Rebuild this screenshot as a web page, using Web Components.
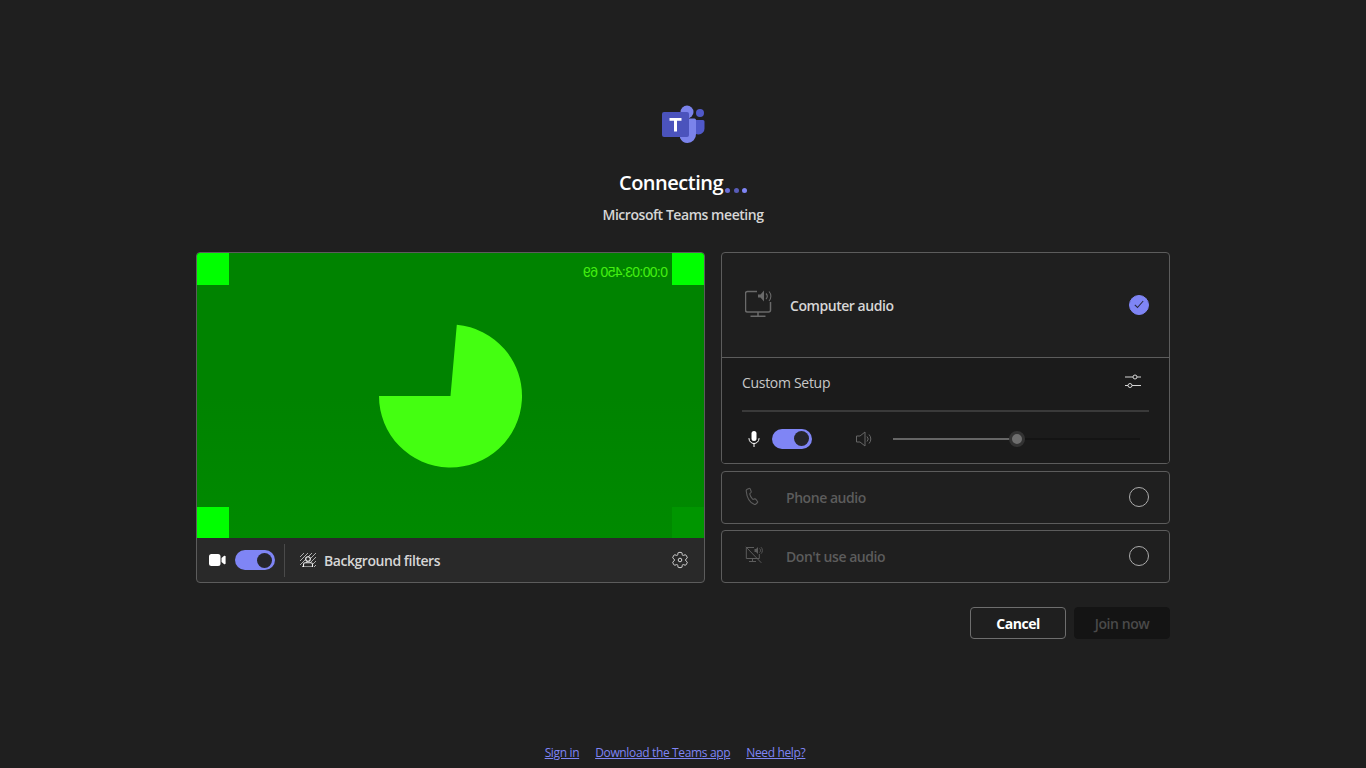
<!DOCTYPE html>
<html lang="en">
<head>
<meta charset="utf-8">
<title>Microsoft Teams meeting</title>
<style>
  html, body { margin: 0; background: #1f1f1f; }
  body { font-family: "Open Sans", "Liberation Sans", sans-serif; color: #fff; }
</style>
</head>
<body>
<prejoin-screen></prejoin-screen>

<script>
const icons = {
  computer: `<svg width="28" height="28" viewBox="0 0 28 28" fill="none" stroke="#6a6a6a"><path d="M12 1.500H2.500a2 2 0 0 0-2 2V20a2 2 0 0 0 2 2h21a2 2 0 0 0 2-2v-8" stroke-width="1.500"/><path d="M13 22v4M5.500 26.200h15" stroke-width="1.500"/><path d="M13 4.500h2.500l3.500-4v11l-3.500-4H13z" fill="#6a6a6a" stroke="none"/><path d="M21 3.500a4 4 0 0 1 0 5.500M24 1.500a7 7 0 0 1 0 9.500" stroke-width="1.100"/></svg>`,
  phone: `<svg width="16" height="18" viewBox="0 0 16 18" fill="none" stroke="#5c5c5c" stroke-width="1.100"><path d="M2.200 2.200 4 1.400c.5-.2 1 0 1.200.5l1 2.500c.2.4 0 .9-.3 1.200L5 6.400c-.2.2-.3.5-.2.8.3 1.600 1.500 3.700 2.800 4.900.2.2.5.3.8.2l1.300-.4c.4-.1.9 0 1.200.4l1.600 2.200c.3.4.2 1-.2 1.300l-1.400 1.200c-.5.4-1.200.6-1.800.3C4.800 15.500 1.800 10 1.200 4c-.1-.8.3-1.500 1-1.800Z"/></svg>`,
  noAudio: `<svg width="18" height="18" viewBox="0 0 18 18" fill="none" stroke="#5c5c5c"><path d="M9 1.500H1.300v11h13V8M7.500 12.500v2.500M4 15.500h7M.8 .8l15.500 16" stroke-width="1"/><path d="M9.500 3h1.500l2-2v7l-2-2H9.500z" fill="#5c5c5c" stroke="none"/><path d="M14.500 2.500a2.500 2.500 0 0 1 0 4M16 1.200a4.500 4.500 0 0 1 0 6.500" stroke-width=".9"/></svg>`
};

class TeamsLogo extends HTMLElement {
  constructor() {
    super();
    this.attachShadow({ mode: 'open' });
    this.shadowRoot.innerHTML = `
      <style>:host { display: block; width: 44px; height: 40px; } svg { display: block; }</style>
      <svg width="44" height="40" viewBox="-1 0 44 40">
        <circle cx="38" cy="9" r="4" fill="#5059c9"/>
        <path d="M31 16h10a1.500 1.500 0 0 1 1.500 1.500v6.500a6 6 0 0 1-6 6.500 6.500 6.500 0 0 1-5.500-3z" fill="#5059c9"/>
        <path d="M18 14.500h14.500a1.500 1.500 0 0 1 1.500 1.500v14a8.500 8.500 0 0 1-8.500 9 8.500 8.500 0 0 1-7.500-5z" fill="#7b83eb"/>
        <circle cx="25" cy="8" r="6.500" fill="#7b83eb"/>
        <rect x="0" y="8" width="27" height="25" rx="2" fill="#4b53bc"/>
        <path d="M7.500 14h12v2.800h-4.500V27.500h-3V16.800h-4.500z" fill="#fff"/>
      </svg>`;
  }
}

class LoadingDots extends HTMLElement {
  constructor() {
    super();
    this.attachShadow({ mode: 'open' });
    this.shadowRoot.innerHTML = `
      <style>
        :host { display: inline-flex; gap: 3.500px; align-items: center; }
        i { width: 5px; height: 5px; border-radius: 50%; background: #7f85f5; }
        i:nth-child(2) { background: #6b70d8; }
        i:nth-child(3) { background: #585cb8; }
      </style>
      <i></i><i></i><i></i>`;
  }
}

class ToggleSwitch extends HTMLElement {
  constructor() {
    super();
    this.attachShadow({ mode: 'open' });
    this.shadowRoot.innerHTML = `
      <style>
        :host { display: flex; justify-content: flex-end; align-items: center; box-sizing: border-box;
                width: 40px; height: 20px; padding-right: 3px; border-radius: 10px; background: #7f85f5; }
        i { width: 15px; height: 15px; border-radius: 50%; background: #26262c; }
      </style>
      <i></i>`;
  }
}

class VideoPreview extends HTMLElement {
  constructor() {
    super();
    this.attachShadow({ mode: 'open' });
    this.shadowRoot.innerHTML = `
      <style>
        :host { display: flex; flex-direction: column; box-sizing: border-box; height: 331px;
                border: 1px solid #5c5c5c; border-radius: 4px; overflow: hidden; background: #292929; }
        .feed { display: block; flex: none; }
        .feed text { font-family: "Liberation Sans", sans-serif; font-size: 14px; letter-spacing: -.65px; fill: #44f010; }
        .bar { flex: 1; display: flex; align-items: center; padding: 0 15px 0 12px; }
        toggle-switch { margin-left: 9px; }
        .sep { width: 1px; height: 33px; background: #4a4a4a; margin: 0 15px 0 9px; }
        .label { margin-left: 8px; flex: 1; font-size: 14px; font-weight: 600; color: #d6d6d6; letter-spacing: -.45px; }
        svg { display: block; flex: none; }
      </style>
      <svg class="feed" width="507" height="285" viewBox="0 0 507 285">
        <defs>
          <linearGradient id="bg" x1="0" y1="0" x2="0" y2="1">
            <stop offset=".5" stop-color="#008300"/>
            <stop offset="1" stop-color="#008a00"/>
          </linearGradient>
        </defs>
        <rect width="507" height="285" fill="url(#bg)"/>
        <rect width="32" height="32" fill="#00ff00"/>
        <rect x="475" width="32" height="32" fill="#00ff00"/>
        <rect y="254" width="32" height="31" fill="#00ff00"/>
        <rect x="475" y="254" width="32" height="31" fill="#009600"/>
        <path d="M253.500 143H182A71.500 71.500 0 1 0 259.800 71.800Z" fill="#44ff11"/>
        <text transform="translate(471 24) scale(-1 1)" xml:space="preserve">0:00:03:450 69</text>
      </svg>
      <div class="bar">
        <svg width="17" height="12" viewBox="0 0 17 12" fill="#fff"><rect width="11.500" height="12" rx="2.500"/><path d="M12.500 4 15.200 1.800c.6-.4 1.400 0 1.400.7v7c0 .7-.8 1.100-1.400.7L12.500 8z"/></svg>
        <toggle-switch></toggle-switch>
        <span class="sep"></span>
        <svg width="16" height="14" viewBox="0 0 16 14" fill="none" stroke="#bdbdbd" stroke-width=".9">
          <path d="M0 4 4 0M0 8 8 0M0 12 12 0M2 14 16 0M6 14 16 4M10 14 16 8M14 14 16 12"/>
          <path d="M3.500 14v-2.500c0-1 .8-1.800 1.800-1.800h5.400c1 0 1.800.8 1.800 1.800V14z" fill="#292929" stroke="#f0f0f0" stroke-width="1.100"/>
          <circle cx="8" cy="6" r="2.300" fill="#292929" stroke="#f0f0f0" stroke-width="1.100"/>
        </svg>
        <span class="label">Background filters</span>
        <svg width="18" height="18" viewBox="0 0 20 20" fill="none" stroke="#d6d6d6" stroke-width="1.100"><path d="M1.910 7.380A8.500 8.500 0 0 1 3.700 4.300a.5.5 0 0 1 .54-.13l1.920.68a1 1 0 0 0 1.320-.76l.36-2a.5.5 0 0 1 .4-.4 8.530 8.530 0 0 1 3.550 0c.2.04.35.2.38.4l.37 2a1 1 0 0 0 1.320.76l1.920-.68a.5.5 0 0 1 .54.13 8.500 8.500 0 0 1 1.780 3.080c.06.2 0 .4-.15.54l-1.560 1.320a1 1 0 0 0 0 1.520l1.560 1.320a.5.5 0 0 1 .15.54 8.500 8.500 0 0 1-1.780 3.080.5.5 0 0 1-.54.13l-1.920-.68a1 1 0 0 0-1.320.76l-.37 2a.5.5 0 0 1-.38.4 8.530 8.530 0 0 1-3.560 0 .5.5 0 0 1-.38-.4l-.36-2a1 1 0 0 0-1.320-.76l-1.920.68a.5.5 0 0 1-.54-.13 8.500 8.500 0 0 1-1.780-3.080.5.5 0 0 1 .15-.54l1.560-1.320a1 1 0 0 0 0-1.520L2.060 7.920a.5.5 0 0 1-.15-.54Z"/><circle cx="10" cy="10" r="2"/></svg>
      </div>`;
  }
}

class AudioOption extends HTMLElement {
  constructor() {
    super();
    this.attachShadow({ mode: 'open' });
    const selected = this.hasAttribute('selected');
    this.shadowRoot.innerHTML = `
      <style>
        :host { display: flex; align-items: center; box-sizing: border-box; height: 51px;
                padding: 0 20px 0 23px; font-size: 14px; font-weight: 600; color: #5c5c5c; }
        :host([selected]) { height: 104px; color: #d6d6d6; }
        .icon { width: 41px; flex: none; display: flex; }
        :host([selected]) .icon { width: 45px; margin-top: 2px; }
        .text { flex: 1; letter-spacing: -.45px; }
        .mark { width: 20px; height: 20px; box-sizing: border-box; border-radius: 50%; border: 1px solid #adadad; display: flex; margin-top: -1px; }
        :host([selected]) .mark { background: #7f85f5; border-color: #7f85f5; }
        svg { display: block; margin: auto; }
      </style>
      <span class="icon"><slot name="icon"></slot></span>
      <span class="text"><slot></slot></span>
      <span class="mark">${selected ? '<svg width="10" height="9" viewBox="0 0 10 9" fill="none" stroke="#2b2b40" stroke-width="1.100"><path d="M.8 4.800 3.500 7.500 9.200 1"/></svg>' : ''}</span>`;
  }
}

class CustomSetup extends HTMLElement {
  constructor() {
    super();
    this.attachShadow({ mode: 'open' });
    this.shadowRoot.innerHTML = `
      <style>
        :host { display: block; box-sizing: border-box; height: 106px; padding: 0 20px; background: #1b1b1b;
                border-top: 1px solid #5c5c5c; font-size: 14px; color: #c8c8c8; }
        .head { display: flex; justify-content: space-between; align-items: center; height: 48px; padding: 0 8px 4px 0;
                border-bottom: 2px solid #3a3a3a; letter-spacing: -.3px; }
        .head svg { margin-bottom: 2px; }
        .controls { display: flex; align-items: center; height: 53px; }
        .mic { margin-right: 6px; }
        .spk { margin-left: 44px; }
        .track { position: relative; margin-left: 21px; width: 247px; height: 2px; background: #141414; }
        .fill { width: 124px; height: 2px; background: #666; }
        .thumb { position: absolute; left: 116px; top: -7px; width: 16px; height: 16px; box-sizing: border-box;
                 border-radius: 50%; background: #6e6e6e; border: 3px solid #333; }
        svg { display: block; flex: none; }
      </style>
      <div class="head">
        <span>Custom Setup</span>
        <svg width="16" height="14" viewBox="0 0 16 14" fill="none" stroke="#d6d6d6" stroke-width="1"><path d="M0 3h8M12 3h4M0 11.500h3M7 11.500h9"/><circle cx="10" cy="3" r="2"/><circle cx="5" cy="11.500" r="2"/></svg>
      </div>
      <div class="controls">
        <svg class="mic" width="24" height="16" viewBox="0 0 24 16" fill="none"><rect x="9.500" y="0" width="5" height="10" rx="2.500" fill="#fff"/><path d="M7 7v.5a5 5 0 0 0 10 0V7M12 12.500V16" stroke="#fff" stroke-width="1"/></svg>
        <toggle-switch></toggle-switch>
        <svg class="spk" width="16" height="16" viewBox="0 0 16 16" fill="none" stroke="#666" stroke-width="1"><path d="M.5 5v6h3.500l5 4V1L4 5z"/><path d="M11 5.500a3.500 3.500 0 0 1 0 5M13 3.500a6.500 6.500 0 0 1 0 9"/></svg>
        <div class="track"><div class="fill"></div><div class="thumb"></div></div>
      </div>`;
  }
}

class AudioCard extends HTMLElement {
  constructor() {
    super();
    this.attachShadow({ mode: 'open' });
    this.shadowRoot.innerHTML = `
      <style>:host { display: block; border: 1px solid #5c5c5c; border-radius: 4px; overflow: hidden; }</style>
      <slot></slot>`;
  }
}

class ActionButton extends HTMLElement {
  constructor() {
    super();
    this.attachShadow({ mode: 'open' });
    this.shadowRoot.innerHTML = `
      <style>
        :host { display: flex; align-items: center; justify-content: center; box-sizing: border-box; width: 96px; height: 32px;
                border: 1px solid #6e6e6e; border-radius: 4px; font-size: 14px; font-weight: 700; color: #fff; letter-spacing: -.45px; }
        :host([disabled]) { background: #141414; border-color: #141414; color: #4a4a4a; font-weight: 600; }
      </style>
      <slot></slot>`;
  }
}

class PrejoinScreen extends HTMLElement {
  constructor() {
    super();
    this.attachShadow({ mode: 'open' });
    this.shadowRoot.innerHTML = `
      <style>
        :host { display: flex; flex-direction: column; align-items: center; box-sizing: border-box;
                height: 768px; padding-top: 104px; overflow: hidden; }
        h1 { display: flex; align-items: flex-end; gap: 2px; margin: 25px 0 0; height: 28px; line-height: 28px;
             font-size: 20px; font-weight: 600; color: #fff; letter-spacing: -.5px; }
        loading-dots { margin-bottom: 4px; }
        p { margin: 8px 0 0; height: 20px; line-height: 20px; font-size: 14px; font-weight: 600; color: #d6d6d6; letter-spacing: -.45px; }
        .main { display: grid; grid-template-columns: 509px 449px; gap: 16px; margin-top: 27px; }
        .audio { display: flex; flex-direction: column; }
        .audio audio-card + audio-card { margin-top: 6px; }
        .audio audio-card:nth-child(2) { margin-top: 7px; }
        .actions { display: flex; justify-content: flex-end; gap: 8px; width: 974px; margin-top: 24px; }
        footer { display: flex; gap: 16px; margin-top: auto; padding: 0 16px 7px 0; font-size: 12px; line-height: 16px; }
        a { color: #7f85f5; text-decoration: underline; letter-spacing: -.35px; }
      </style>
      <teams-logo></teams-logo>
      <h1>Connecting<loading-dots></loading-dots></h1>
      <p>Microsoft Teams meeting</p>
      <div class="main">
        <video-preview></video-preview>
        <div class="audio">
          <audio-card>
            <audio-option selected><span slot="icon">${icons.computer}</span>Computer audio</audio-option>
            <custom-setup></custom-setup>
          </audio-card>
          <audio-card><audio-option><span slot="icon">${icons.phone}</span>Phone audio</audio-option></audio-card>
          <audio-card><audio-option><span slot="icon">${icons.noAudio}</span>Don't use audio</audio-option></audio-card>
        </div>
      </div>
      <div class="actions">
        <action-button>Cancel</action-button>
        <action-button disabled>Join now</action-button>
      </div>
      <footer>
        <a href="#">Sign in</a>
        <a href="#">Download the Teams app</a>
        <a href="#">Need help?</a>
      </footer>`;
  }
}

customElements.define('teams-logo', TeamsLogo);
customElements.define('loading-dots', LoadingDots);
customElements.define('toggle-switch', ToggleSwitch);
customElements.define('video-preview', VideoPreview);
customElements.define('audio-option', AudioOption);
customElements.define('custom-setup', CustomSetup);
customElements.define('audio-card', AudioCard);
customElements.define('action-button', ActionButton);
customElements.define('prejoin-screen', PrejoinScreen);
</script>
</body>
</html>
